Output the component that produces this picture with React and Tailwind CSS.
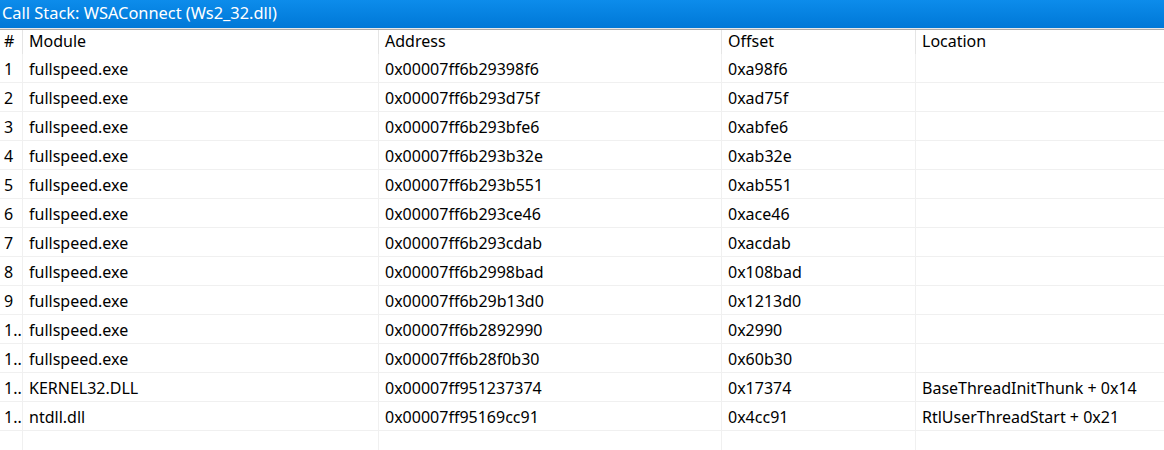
import React from "react";

const rows = [
  ["1", "fullspeed.exe", "0x00007ff6b29398f6", "0xa98f6", ""],
  ["2", "fullspeed.exe", "0x00007ff6b293d75f", "0xad75f", ""],
  ["3", "fullspeed.exe", "0x00007ff6b293bfe6", "0xabfe6", ""],
  ["4", "fullspeed.exe", "0x00007ff6b293b32e", "0xab32e", ""],
  ["5", "fullspeed.exe", "0x00007ff6b293b551", "0xab551", ""],
  ["6", "fullspeed.exe", "0x00007ff6b293ce46", "0xace46", ""],
  ["7", "fullspeed.exe", "0x00007ff6b293cdab", "0xacdab", ""],
  ["8", "fullspeed.exe", "0x00007ff6b2998bad", "0x108bad", ""],
  ["9", "fullspeed.exe", "0x00007ff6b29b13d0", "0x1213d0", ""],
  ["1..", "fullspeed.exe", "0x00007ff6b2892990", "0x2990", ""],
  ["1..", "fullspeed.exe", "0x00007ff6b28f0b30", "0x60b30", ""],
  ["1..", "KERNEL32.DLL", "0x00007ff951237374", "0x17374", "BaseThreadInitThunk + 0x14"],
  ["1..", "ntdll.dll", "0x00007ff95169cc91", "0x4cc91", "RtlUserThreadStart + 0x21"],
];

const cols = ["w-[23px] pl-[4px]", "w-[356px] pl-[6px]", "w-[343px] pl-[6px]", "w-[194px] pl-[6px]", "flex-1 pl-[6px]"];

export default function App() {
  return (
    <div className="w-[1164px] h-[450px] overflow-hidden bg-white text-black text-[16px]" style={{ fontFamily: '"Noto Sans", "Open Sans", sans-serif' }}>
      <div className="h-[28px] bg-gradient-to-b from-[#0d8ceb] to-[#0078d7] text-white text-[16.4px] leading-[26px] pl-[2px] whitespace-nowrap">
        Call Stack: WSAConnect (Ws2_32.dll)
      </div>
      <div className="h-[2px] bg-[#ababab] border-t border-[#e8e8e8]" />
      <div className="flex h-[24px] leading-[22px]">
        {["#", "Module", "Address", "Offset", "Location"].map((h, i) => (
          <div key={i} className={`${cols[i]} ${i < 4 ? "border-r border-[#e5e5e5]" : ""} whitespace-nowrap overflow-hidden`}>
            {h}
          </div>
        ))}
      </div>
      {rows.map((r, ri) => (
        <div key={ri} className="flex h-[29px] border-b border-[#f0f0f0] leading-[30px]">
          {r.map((c, i) => (
            <div key={i} className={`${cols[i]} ${i < 4 ? "border-r border-[#f0f0f0]" : ""} whitespace-nowrap overflow-hidden`}>
              {c}
            </div>
          ))}
        </div>
      ))}
      <div className="flex h-[30px]">
        {cols.map((c, i) => (
          <div key={i} className={`${c} ${i < 4 ? "border-r border-[#f0f0f0]" : ""}`} />
        ))}
      </div>
    </div>
  );
}
